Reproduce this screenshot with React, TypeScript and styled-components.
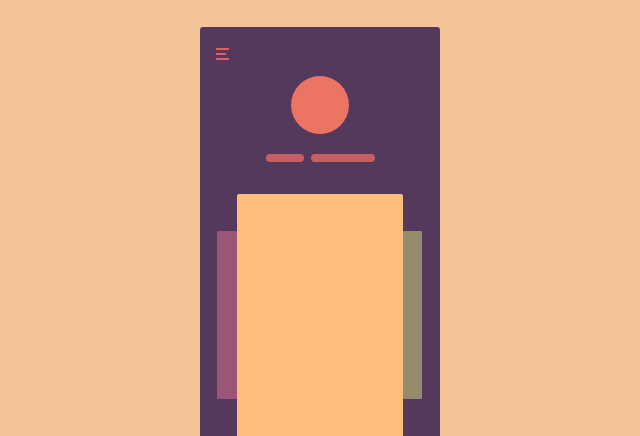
import styled, { createGlobalStyle } from "styled-components";

const GlobalStyle = createGlobalStyle`
    html, body {
        margin: 0;
        padding: 0;
        height: 100%;
        overflow: hidden;
        background: #f4c397;
        font-family: "Liberation Sans", Arial, sans-serif;
    }
`;

export default function App() {
    return (
        <>
            <GlobalStyle />
            <Page>
                <Phone>
                    <Header>
                        <Burger aria-label="menu">
                            <BurgerLine $width={13} />
                            <BurgerLine $width={10} />
                            <BurgerLine $width={13} />
                        </Burger>
                    </Header>
                    <Profile>
                        <Avatar />
                        <NameRow>
                            <Pill $width={38} />
                            <Pill $width={64} />
                        </NameRow>
                    </Profile>
                    <CardStack>
                        <SideCard $color="#9a5577" $width={20} />
                        <MainCard />
                        <SideCard $color="#958c6d" $width={19} />
                    </CardStack>
                </Phone>
            </Page>
        </>
    );
}

const Page = styled.div`
    display: flex;
    justify-content: center;
    padding-top: 27px;
`;

const Phone = styled.div`
    width: 240px;
    background: #55395d;
    border-radius: 3px 3px 0 0;
    display: flex;
    flex-direction: column;
`;

const Header = styled.div`
    display: flex;
    padding: 20px 16px 0;
    height: 29px;
    flex-shrink: 0;
`;

const Burger = styled.div`
    display: flex;
    flex-direction: column;
    gap: 3.5px;
    padding-top: 1px;
`;

const BurgerLine = styled.span<{ $width: number }>`
    display: block;
    width: ${(p) => p.$width}px;
    height: 1.5px;
    background: #e3605f;
`;

const Profile = styled.div`
    display: flex;
    flex-direction: column;
    align-items: center;
`;

const Avatar = styled.div`
    width: 58px;
    height: 58px;
    border-radius: 50%;
    background: #ec7462;
`;

const NameRow = styled.div`
    display: flex;
    gap: 7px;
    margin-top: 20px;
`;

const Pill = styled.span<{ $width: number }>`
    width: ${(p) => p.$width}px;
    height: 8px;
    border-radius: 4px;
    background: #c65f61;
`;

const CardStack = styled.div`
    display: flex;
    justify-content: center;
    align-items: flex-start;
    margin-top: 32px;
    padding-right: 1px;
`;

const SideCard = styled.div<{ $color: string; $width: number }>`
    width: ${(p) => p.$width}px;
    height: 168px;
    margin-top: 37px;
    background: ${(p) => p.$color};
    border-radius: 1px;
`;

const MainCard = styled.div`
    width: 166px;
    height: 260px;
    background: #fdbe7b;
    border-radius: 2px 2px 0 0;
`;
